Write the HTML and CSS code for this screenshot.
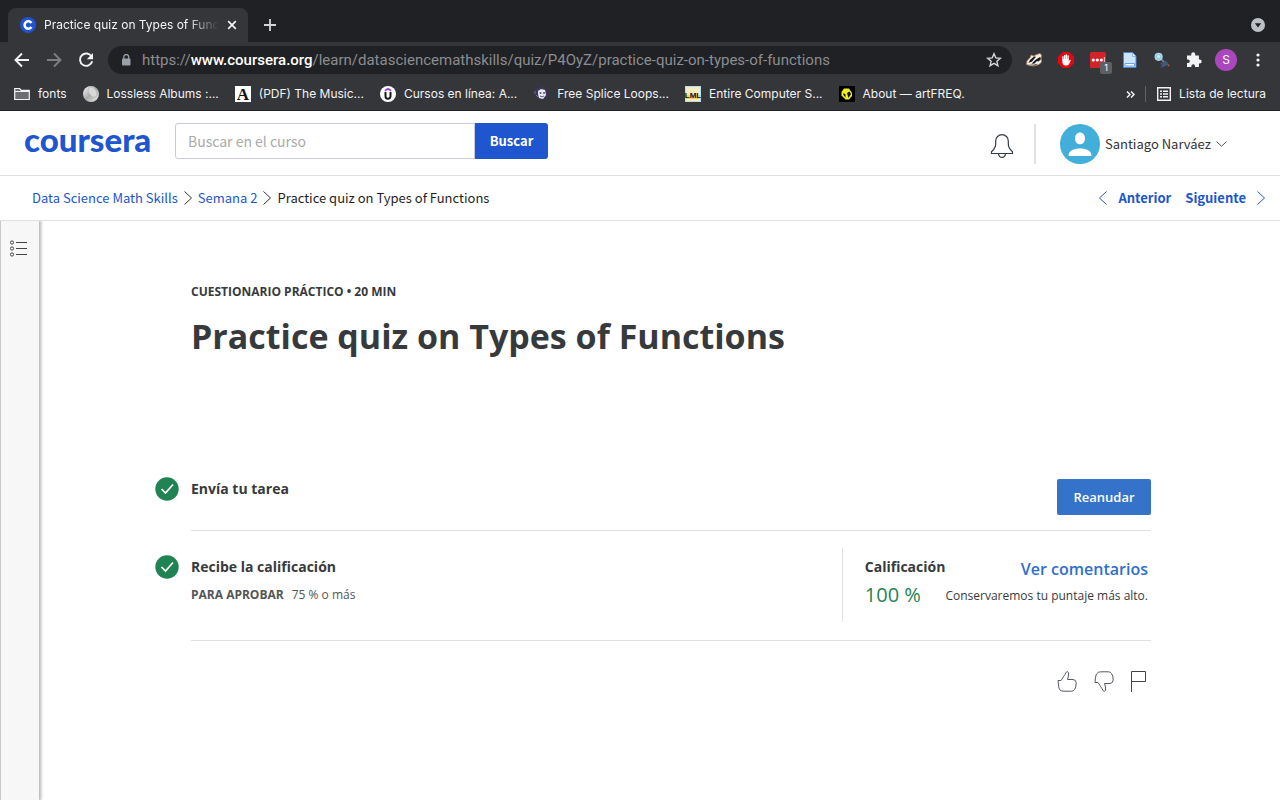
FILE: index.html
```html
<!DOCTYPE html>
<html lang="es">
<head>
<meta charset="utf-8">
<meta name="viewport" content="width=device-width, initial-scale=1">
<title>Practice quiz on Types of Functions</title>
<link rel="stylesheet" href="styles.css">
</head>
<body>
<div class="browser">
  <div class="tabstrip">
    <div class="tab">
      <svg class="ico16" viewBox="0 0 16 16"><circle cx="8" cy="8" r="8" fill="#1f53d0"/><path d="M11.4 6A3.7 3.7 0 1 0 11.4 10" fill="none" stroke="#fff" stroke-width="2.5"/></svg>
      <span class="tab-title">Practice quiz on Types of Func</span>
      <button class="plain" aria-label="Cerrar pestaña"><svg width="10" height="10" viewBox="0 0 10 10"><path d="M1.2 1.2l7.6 7.6M8.800 1.200L1.200 8.800" stroke="#f1f3f4" stroke-width="1.700"/></svg></button>
    </div>
    <button class="plain new-tab" aria-label="Nueva pestaña"><svg width="12" height="12" viewBox="0 0 12 12"><path d="M6 0v12M0 6h12" stroke="#d3d5d8" stroke-width="1.800"/></svg></button>
    <button class="plain tab-search" aria-label="Buscar pestañas"><svg width="14" height="14" viewBox="0 0 14 14"><circle cx="7" cy="7" r="7" fill="#bdc1c6"/><path d="M3.800 5.200h6.400L7 9.600z" fill="#202124"/></svg></button>
  </div>
  <div class="toolbar">
    <button class="plain" aria-label="Atrás"><svg class="ico16" viewBox="0 0 16 16"><path d="M15 8H2M8 1.500L1.500 8 8 14.500" fill="none" stroke="#f1f3f4" stroke-width="1.900"/></svg></button>
    <button class="plain" aria-label="Adelante"><svg class="ico16" viewBox="0 0 16 16"><path d="M1 8h13M8 1.500L14.500 8 8 14.500" fill="none" stroke="#7d7f83" stroke-width="1.900"/></svg></button>
    <button class="plain" aria-label="Recargar"><svg class="ico16" viewBox="0 0 16 16"><path d="M13.600 4.600A6.200 6.200 0 1 0 14.200 9.200" fill="none" stroke="#f1f3f4" stroke-width="1.900"/><path d="M15 1v6.200H8.800z" fill="#f1f3f4"/></svg></button>
    <div class="address">
      <svg width="10" height="12" viewBox="0 0 10 12"><rect x="1" y="4.500" width="8.500" height="7" rx="1" fill="#9aa0a6"/><path d="M2.800 5V3a2.450 2.450 0 0 1 4.900 0v2" fill="none" stroke="#9aa0a6" stroke-width="1.300"/></svg>
      <span class="url">https://<b>www.coursera.org</b>/learn/datasciencemathskills/quiz/P4OyZ/practice-quiz-on-types-of-functions</span>
      <button class="plain" aria-label="Marcar página"><svg class="ico16" viewBox="0 0 16 16"><path d="M8 1.800l1.800 4.100 4.500.4-3.400 3 1 4.400L8 11.400l-3.900 2.300 1-4.400-3.400-3 4.500-.4z" fill="none" stroke="#d3d5d8" stroke-width="1.400"/></svg></button>
    </div>
    <div class="extensions">
      <svg class="ico16" viewBox="0 0 16 16"><path d="M.5 12.500L1 9l3.500-4L5 3l2.500 1L11 2.500 14 1.500l1.500 1.500-.5 3 .5 4-2.500 2.500L8 14l-4-.5z" fill="#f4efe8" stroke="#b98555" stroke-width=".8"/><path d="M4 8l4-3.500 2 .3L6 9.500 2.500 11zM10 7.500L14 5l1 2-2.500 2.500-1.500-.5-2.500 2.500-3 .2 3-3zM2 12.500l6 .2 4-1L9 13.500z" fill="#17191b"/></svg>
      <svg class="ico16" viewBox="0 0 16 16"><path d="M4.700 0h6.600L16 4.700v6.600L11.300 16H4.700L0 11.300V4.700z" fill="#e30613"/><path d="M4.300 8.500V4.500q.7-.8 1.300 0V7h.4V3.300q.7-.9 1.400 0V7h.3V2.700q.7-.9 1.400 0V7h.4V3.800q.7-.9 1.300 0v5.400l1-1.300q.9-.5 1 .3L11 12.200Q10 13.600 8 13.500H7q-2.700-.8-2.700-4z" fill="#fff"/></svg>
      <span class="badged"><svg class="ico16" viewBox="0 0 16 16"><rect width="16" height="16" rx="1.500" fill="#d32228"/><circle cx="3.300" cy="8" r="1.600" fill="#fff"/><circle cx="7.300" cy="8" r="1.600" fill="#fff"/><circle cx="11.300" cy="8" r="1.600" fill="#fff"/><path d="M14.300 5v5" stroke="#fff" stroke-width=".8"/></svg><span class="badge">1</span></span>
      <svg class="ico16" viewBox="0 0 16 16"><path d="M1.500.5h9l3.500 4V15.500H1.500z" fill="#cbe5fb" stroke="#4a86d0"/><path d="M10.500.5v4H14z" fill="#f0f7ff" stroke="#6b9ddb" stroke-width=".7"/><path d="M3 11.500h9.500v2.500H3z" fill="#fff" stroke="#4c91e1" stroke-width=".8"/></svg>
      <svg class="ico16" viewBox="0 0 16 16"><path d="M7 7l4 4" stroke="#8b8f94" stroke-width="1.600"/><circle cx="4.600" cy="4.800" r="3.500" fill="#8fcfea" stroke="#b9d3dd" stroke-width="1.200"/><circle cx="4.600" cy="4.400" r="1.500" fill="#c9edfa"/><path d="M6 10.500l2.500.5L11 8.500l2.500 1.500.5 2.500-2 1-3 1.500-3 .5 2-2z" fill="#405b80"/><path d="M13.500 12l2.500 1-2 2z" fill="#a85346"/></svg>
      <svg class="ico16" viewBox="0 0 16 16"><path d="M1 3.500h4.200V2.200a2 2 0 0 1 4 0v1.300h3.700v4h.8a2 2 0 0 1 0 4h-.8V15H9v-1a1.800 1.800 0 0 0-3.600 0v1H1v-4h1a1.800 1.800 0 0 0 0-3.600H1z" fill="#f1f3f4"/></svg>
    </div>
    <button class="plain profile" aria-label="Perfil">S</button>
    <button class="plain menu" aria-label="Menú"><svg width="4" height="14" viewBox="0 0 4 14"><g fill="#f1f3f4"><circle cx="2" cy="2" r="1.600"/><circle cx="2" cy="7" r="1.600"/><circle cx="2" cy="12" r="1.600"/></g></svg></button>
  </div>
  <nav class="bookmarks" aria-label="Marcadores">
    <a href="#"><svg class="ico16" viewBox="0 0 16 16"><path d="M.7 13.500v-11h5l1.500 1.800h8.100v9.200z" fill="#6c6d70" stroke="#f1f3f4" stroke-width="1.200"/><path d="M1 5.500h14" stroke="#f1f3f4"/></svg>fonts</a>
    <a href="#"><svg class="ico16" viewBox="0 0 16 16"><defs><linearGradient id="disc" x1="0" y1="0" x2="1" y2="1"><stop stop-color="#fafafa"/><stop offset=".5" stop-color="#aaa"/><stop offset="1" stop-color="#eee"/></linearGradient></defs><circle cx="8" cy="8" r="8" fill="url(#disc)"/><ellipse cx="9.500" cy="6" rx="3.600" ry="5.600" transform="rotate(-35 9.500 6)" fill="#d8d8d8" stroke="#b5b5b5" stroke-width=".6"/></svg>Lossless Albums :...</a>
    <a href="#"><svg class="ico16" viewBox="0 0 16 16"><path d="M0 0h16v16H0z" fill="#fff"/><text class="mark-a" x="8" y="14" text-anchor="middle">A</text></svg>(PDF) The Music...</a>
    <a href="#"><svg class="ico16" viewBox="0 0 16 16"><circle cx="8" cy="8" r="8" fill="#fff"/><path d="M5.500 6v4.300a2.500 2.500 0 0 0 5 0V6" fill="none" stroke="#18191b" stroke-width="2"/><path d="M4.800 4.800L8 2.800l3.200 2" fill="none" stroke="#a435f0" stroke-width="1.600"/></svg>Cursos en línea: A...</a>
    <a href="#"><svg class="ico16" viewBox="0 0 16 16"><path d="M2 3l8-2 4 3v6l-4 4-5-1z" fill="#3d365f"/><path d="M5 5l3-2 4 1 1 5-3 4-4-1-1-4z" fill="#e8e8ed"/><circle cx="7.500" cy="7" r="1" fill="#555174"/><circle cx="11" cy="7" r="1" fill="#555174"/><path d="M7 10q2 1.500 4 0" stroke="#65617d" fill="none"/><path d="M2 5v3M3 9l2 2" stroke="#7672b3"/></svg>Free Splice Loops...</a>
    <a href="#"><svg class="ico16" viewBox="0 0 16 16"><path d="M0 0h16v16H0z" fill="#b5dcef"/><path d="M1 1h14v14H1z" fill="#f7ecc0"/><path d="M1 9h14v4H1z" fill="#f3d455"/><text class="mark-l" x="8" y="12" text-anchor="middle">LML</text></svg>Entire Computer S...</a>
    <a href="#"><svg class="ico16" viewBox="0 0 16 16"><path d="M0 0h16v16H0z" fill="#000"/><path d="M5 2.500h5L13 7v3l-3 3.500H6.500L2.500 9.500V6z" fill="#f0ed22"/><path d="M8 7l2.500-1.500L12 8l-2.500 4zM4.500 7l2 1.500v3L4.500 9z" fill="#111"/></svg>About — artFREQ.</a>
    <button class="plain more" aria-label="Más marcadores"><svg width="9" height="7" viewBox="0 0 9 7"><path d="M1 .5l3 3-3 3M5 .5l3 3-3 3" fill="none" stroke="#f1f3f4" stroke-width="1.500"/></svg></button>
    <a class="reading" href="#"><svg width="14" height="14" viewBox="0 0 14 14"><path d="M.7.700h12.600v12.600H.7z" fill="none" stroke="#f1f3f4" stroke-width="1.400"/><path d="M3 4.200h2M6 4.200h5M3 7h2M6 7h5M3 9.800h2M6 9.800h5" stroke="#f1f3f4" stroke-width="1.500"/></svg>Lista de lectura</a>
  </nav>
</div>

<header class="site-header">
  <a class="logo" href="#">coursera</a>
  <form class="search" role="search">
    <input type="search" placeholder="Buscar en el curso" aria-label="Buscar en el curso">
    <button type="button">Buscar</button>
  </form>
  <button class="plain bell" aria-label="Notificaciones"><svg width="24" height="26" viewBox="0 0 24 26"><path d="M1.500 20.500v-1.800c2.500-2 4.200-5 4.200-8V8a6.300 6.300 0 0 1 12.600 0v2.700c0 3 1.700 6 4.200 8v1.800zM8.500 20.500c.4 5.200 6.600 5.200 7 0" fill="none" stroke="#333a42" stroke-width="1.200"/></svg></button>
  <button class="plain account">
    <svg width="40" height="40" viewBox="0 0 40 40"><circle cx="20" cy="20" r="20" fill="#42aeda"/><path d="M15 14.500c0-8 10-8 10 0 0 7.800-10 7.800-10 0zM8.500 32c0-5.500 5-7.500 11.500-7.500S31.500 26.500 31.500 32z" fill="#fff"/></svg>
    <span>Santiago Narváez</span>
    <svg width="11" height="6" viewBox="0 0 11 6"><path d="M.5.500l5 4.800 5-4.800" fill="none" stroke="#555" stroke-width="1"/></svg>
  </button>
</header>

<div class="subnav">
  <nav class="crumbs" aria-label="Ruta">
    <a href="#">Data Science Math Skills</a>
    <svg width="8" height="14" viewBox="0 0 8 14"><path d="M.5.500L7.500 7l-7 6.500" fill="none" stroke="#333"/></svg>
    <a href="#">Semana 2</a>
    <svg width="8" height="14" viewBox="0 0 8 14"><path d="M.5.500L7.500 7l-7 6.500" fill="none" stroke="#333"/></svg>
    <span>Practice quiz on Types of Functions</span>
  </nav>
  <nav class="pager" aria-label="Elementos">
    <a href="#"><svg width="8" height="14" viewBox="0 0 8 14"><path d="M7.500.500L.5 7l7 6.500" fill="none" stroke="#2055d0"/></svg>Anterior</a>
    <a href="#">Siguiente<svg width="8" height="14" viewBox="0 0 8 14"><path d="M.5.500L7.500 7l-7 6.500" fill="none" stroke="#2055d0"/></svg></a>
  </nav>
</div>

<div class="layout">
  <aside class="rail">
    <button class="plain" aria-label="Mostrar contenido"><svg width="18" height="17" viewBox="0 0 18 17"><g fill="none" stroke="#444"><circle cx="2" cy="2.500" r="1.600"/><circle cx="2" cy="8.500" r="1.600"/><circle cx="2" cy="14.500" r="1.600"/><path d="M6 2.500h11M6 8.500h11M6 14.500h11"/></g></svg></button>
  </aside>
  <main class="main">
    <div class="quiz">
      <div class="intro">
        <p class="kind">CUESTIONARIO PRÁCTICO • 20 MIN</p>
        <h1>Practice quiz on Types of Functions</h1>
      </div>
      <section class="step">
        <svg class="check" viewBox="0 0 24 24"><circle cx="12" cy="12" r="11.700" fill="#1f8354"/><path d="M6.500 12l4 4 7.500-8.500" fill="none" stroke="#fff" stroke-width="1.700"/></svg>
        <div class="step-body submit">
          <h2>Envía tu tarea</h2>
          <button class="resume">Reanudar</button>
        </div>
      </section>
      <section class="step">
        <svg class="check check-grade" viewBox="0 0 24 24"><circle cx="12" cy="12" r="11.700" fill="#1f8354"/><path d="M6.500 12l4 4 7.500-8.500" fill="none" stroke="#fff" stroke-width="1.700"/></svg>
        <div class="step-body grading">
          <div class="receive">
            <h2>Recibe la calificación</h2>
            <p class="pass"><b>PARA APROBAR</b><span>75 % o más</span></p>
          </div>
          <div class="grade">
            <div>
              <h2>Calificación</h2>
              <p class="score">100 %</p>
            </div>
            <div class="feedback">
              <a href="#">Ver comentarios</a>
              <p>Conservaremos tu puntaje más alto.</p>
            </div>
          </div>
        </div>
      </section>
      <div class="rate">
        <button class="plain" aria-label="Me gusta"><svg width="20" height="21" viewBox="0 0 20 21"><path d="M1 9.500h3C5.500 7.500 6 6 8 3.500 9 1 9.800.500 10.600.700q1.400.6 1 2.300Q11.500 6 10.500 8.500H16q3 .3 3.200 3 0 5-1.700 7.200-1.200 1.500-3 1.500H6Q4 20 2.500 18.500 1.500 17 1 9.500z" fill="none" stroke="#555960"/></svg></button>
        <button class="plain" aria-label="No me gusta"><svg width="20" height="21" viewBox="0 0 20 21"><path d="M1 11.500h3c1.500 2 2 3.500 4 6 1 2.500 1.800 3 2.600 2.800q1.400-.6 1-2.300-.1-3-1.100-5.500H16q3-.3 3.200-3.500 0-4.500-1.700-6.500Q16.300.800 14.500.800H6.500Q4 .8 2.500 3 1.200 5 1 11.500z" fill="none" stroke="#555960"/></svg></button>
        <button class="plain" aria-label="Informar de un problema"><svg width="16" height="21" viewBox="0 0 16 21"><path d="M.5 21V.5h14v10H.5" fill="none" stroke="#414449"/></svg></button>
      </div>
    </div>
  </main>
</div>
</body>
</html>
```

FILE: styles.css
```css
* { box-sizing: border-box; }
body {
  margin: 0;
  min-height: 100vh;
  display: flex;
  flex-direction: column;
  background: #fff;
  color: #373a3c;
  font-family: "Open Sans", sans-serif;
}
svg { display: block; flex: none; }
a { text-decoration: none; }
h1, h2, p { margin: 0; }
.plain {
  padding: 0;
  border: 0;
  background: none;
  color: inherit;
  font: inherit;
}
.ico16 { width: 16px; height: 16px; }

/* Browser window */
.browser {
  background: #35363a;
  border-bottom: 1px solid #202124;
  color: #f1f3f4;
  font: 12px/16px Inter, sans-serif;
}
.tabstrip {
  display: flex;
  align-items: center;
  height: 42px;
  padding: 8px 15px 0 8px;
  background: #202124;
}
.tab {
  display: flex;
  align-items: center;
  gap: 8px;
  width: 240px;
  height: 34px;
  padding: 0 11px 0 12px;
  border-radius: 8px 8px 0 0;
  background: #35363a;
}
.tab-title {
  flex: 1;
  white-space: nowrap;
  mask-image: linear-gradient(to right, #000 82%, transparent);
}
.new-tab { margin-left: 16px; }
.tab-search { margin-left: auto; }
.toolbar {
  display: flex;
  align-items: center;
  gap: 16px;
  height: 36px;
  padding: 0 20px 0 14px;
}
.address {
  flex: 1;
  display: flex;
  align-items: center;
  gap: 11px;
  height: 28px;
  margin-left: -2px;
  padding: 0 10px 0 13px;
  border-radius: 14px;
  background: #202124;
}
.url {
  flex: 1;
  min-width: 0;
  overflow: hidden;
  white-space: nowrap;
  color: #8b8d91;
  font: 15px/20px Roboto, sans-serif;
}
.url b { color: #fff; font-weight: 500; }
.extensions { display: flex; gap: 16px; margin-left: -2px; }
.badged { position: relative; }
.badge {
  position: absolute;
  left: 10px;
  top: 10px;
  width: 12px;
  border-radius: 2px;
  background: #5f6063;
  color: #fff;
  font-size: 9px;
  line-height: 12px;
  text-align: center;
}
.profile {
  width: 22px;
  height: 22px;
  margin-left: -3px;
  border-radius: 50%;
  background: #ab47bc;
  color: #fff;
}
.menu { margin-left: 3px; }
.bookmarks {
  display: flex;
  align-items: center;
  gap: 16px;
  height: 32px;
  padding: 0 14px;
}
.bookmarks a {
  display: flex;
  align-items: center;
  gap: 8px;
  color: #f1f3f4;
  white-space: nowrap;
}
.mark-a { fill: #111; font: bold 17px "Liberation Serif", serif; }
.mark-l { fill: #111; font: bold 8px "Liberation Sans", sans-serif; }
.more { margin-left: auto; margin-right: -6px; }
.bookmarks .reading { padding-left: 11px; border-left: 1px solid #5f6368; }

/* Site header */
.site-header {
  display: flex;
  align-items: center;
  height: 65px;
  padding: 0 53px 0 24px;
  border-bottom: 1px solid #e1e1e1;
  font-family: "Noto Sans CJK SC", sans-serif;
}
.logo {
  width: 151px;
  padding-bottom: 8px;
  color: #2055d0;
  font: 900 33px/40px Lato, sans-serif;
}
.search { display: flex; width: 373px; height: 36px; margin-bottom: 4px; }
.search input {
  flex: 1;
  min-width: 0;
  padding: 0 12px;
  border: 1px solid #c7cad8;
  border-radius: 3px 0 0 3px;
  background: #fff;
  color: #333;
  font: 14px/20px "Noto Sans CJK SC", sans-serif;
}
.search input::placeholder { color: #aaa; }
.search button {
  width: 73px;
  border: 0;
  border-radius: 0 3px 3px 0;
  background: #2055d0;
  color: #fff;
  font: bold 13px/20px "Noto Sans CJK SC", sans-serif;
}
.bell { margin-left: auto; padding-top: 6px; }
.account {
  display: flex;
  align-items: center;
  gap: 5px;
  margin: 2px 0 0 20px;
  padding-left: 24px;
  border-left: 2px solid #e1e1e1;
  color: #333;
  font-size: 13px;
  line-height: 20px;
}
.subnav {
  display: flex;
  justify-content: space-between;
  align-items: center;
  height: 45px;
  padding: 0 15px 0 32px;
  border-bottom: 1px solid #e1e1e1;
  font: 13px/20px "Noto Sans CJK SC", sans-serif;
}
.subnav a { color: #2055d0; }
.crumbs { display: flex; align-items: center; gap: 6px; color: #1f1f1f; }
.pager { display: flex; gap: 14px; font-weight: bold; }
.pager a { display: flex; align-items: center; gap: 11px; }

/* Course item */
.layout { flex: 1; display: flex; }
.rail {
  width: 39px;
  padding: 19px 0 0 9px;
  border-left: 1px solid #c8c8c8;
  background: #f7f7f7;
  box-shadow: 1px 0 3px 1px rgba(0, 0, 0, .3);
  clip-path: inset(0 -8px 0 0);
}
.main { flex: 1; padding: 61px 13px 40px 0; }
.quiz { max-width: 996px; margin: 0 auto; }
.intro { padding: 0 0 99px 36px; }
.kind { font-size: 12px; font-weight: bold; line-height: 20px; }
h1 { margin-top: 10px; font-size: 34px; line-height: 48px; }
h2 { font-size: 14px; line-height: 20px; }
.step { display: grid; grid-template-columns: 24px 1fr; gap: 12px; }
.check { width: 24px; height: 24px; margin-top: 18px; }
.check-grade { margin-top: 24px; }
.step-body { display: flex; justify-content: space-between; border-bottom: 1px solid #e1e1e1; }
.submit { padding: 20px 0 15px; }
.resume {
  width: 94px;
  height: 36px;
  border: 0;
  border-radius: 2px;
  background: #3572c9;
  color: #fff;
  font: 600 13px/20px "Open Sans", sans-serif;
}
.grading { padding: 17px 0 18px; }
.receive { padding-top: 9px; }
.pass { display: flex; gap: 8px; margin-top: 8px; color: #555; font-size: 12px; line-height: 20px; }
.grade { display: flex; padding: 9px 3px 0 22px; min-height: 74px; border-left: 1px solid #e1e1e1; }
.score { margin-top: 4px; color: #1f8354; font-size: 20px; line-height: 28px; }
.feedback { text-align: right; }
.feedback a { color: #2f6fcb; font-size: 16px; font-weight: 600; line-height: 24px; }
.feedback p { margin-top: 5px; font-size: 12px; line-height: 20px; }
.rate { display: flex; justify-content: flex-end; gap: 17px; padding: 30px 4px 0 0; }
```
